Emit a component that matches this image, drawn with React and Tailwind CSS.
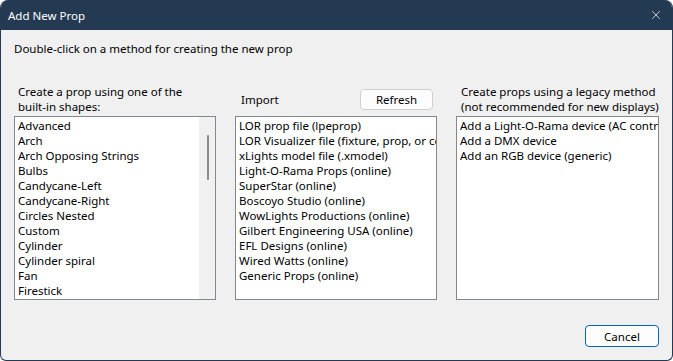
import { X } from "lucide-react";

const shapes = [
  "Advanced",
  "Arch",
  "Arch Opposing Strings",
  "Bulbs",
  "Candycane-Left",
  "Candycane-Right",
  "Circles Nested",
  "Custom",
  "Cylinder",
  "Cylinder spiral",
  "Fan",
  "Firestick",
];

const imports = [
  "LOR prop file (lpeprop)",
  "LOR Visualizer file (fixture, prop, or container)",
  "xLights model file (.xmodel)",
  "Light-O-Rama Props (online)",
  "SuperStar (online)",
  "Boscoyo Studio (online)",
  "WowLights Productions (online)",
  "Gilbert Engineering USA (online)",
  "EFL Designs (online)",
  "Wired Watts (online)",
  "Generic Props (online)",
];

const legacy = [
  "Add a Light-O-Rama device (AC controller)",
  "Add a DMX device",
  "Add an RGB device (generic)",
];

const ListBox = ({ items, scroll, pad = "pl-[3px]" }) => (
  <div className="flex h-[184px] border border-[#828790] bg-white overflow-hidden">
    <div className={`flex-1 min-w-0 pt-[1px] ${pad}`}>
      {items.map((item) => (
        <div key={item} className="h-[15px] leading-[15px] whitespace-nowrap overflow-hidden">
          {item}
        </div>
      ))}
    </div>
    {scroll && (
      <div className="w-[16px] bg-[#f0f0f0] flex justify-center pt-[18px] pl-[1px]">
        <div className="w-[2px] h-[45px] bg-[#8a8a8a] rounded-full" />
      </div>
    )}
  </div>
);

export default function App() {
  return (
    <div className="w-[673px] h-[361px] bg-white">
      <div
        className="w-full h-full flex flex-col bg-[#f0f0f0] border border-[#243a52] border-t-0 rounded-t-[8px] rounded-b-[6px] overflow-hidden text-[11.5px] text-black"
        style={{ fontFamily: '"Noto Sans", "Open Sans", sans-serif' }}
      >
        {/* Title bar */}
        <div className="h-[30px] shrink-0 bg-[#243a52] flex items-center justify-between pl-[7px] pr-[9px] text-white">
          <span className="leading-[15px]">Add New Prop</span>
          <X className="w-[14px] h-[14px]" strokeWidth={1.2} />
        </div>

        <div className="flex-1 flex flex-col px-[13px]">
          <div className="pt-[11px] leading-[15px]">
            Double-click on a method for creating the new prop
          </div>

          <div className="mt-[28px] flex gap-[19px]">
            {/* Built-in shapes */}
            <div className="w-[202px] flex flex-col">
              <div className="h-[32px] leading-[15px] pl-[4px]">
                Create a prop using one of the
                <br />
                built-in shapes:
              </div>
              <ListBox items={shapes} scroll />
            </div>

            {/* Import */}
            <div className="w-[202px] flex flex-col">
              <div className="h-[32px] flex items-start justify-between pl-[6px] pr-[4px] pt-[5px]">
                <span className="leading-[15px] mt-[3px]">Import</span>
                <button className="w-[73px] h-[21px] border border-[#d0d0d0] bg-[#fdfdfd] rounded-[4px] leading-[15px]">
                  Refresh
                </button>
              </div>
              <ListBox items={imports} pad="pl-[3px]" />
            </div>

            {/* Legacy */}
            <div className="w-[203px] flex flex-col">
              <div className="h-[32px] leading-[15px] pl-[5px] whitespace-nowrap">
                Create props using a legacy method
                <br />
                (not recommended for new displays)
              </div>
              <ListBox items={legacy} />
            </div>
          </div>

          <div className="flex justify-end mt-[25px]">
            <button className="w-[74px] h-[22px] border border-[#0067c0] bg-[#fdfdfd] rounded-[4px] leading-[15px]">
              Cancel
            </button>
          </div>
        </div>
      </div>
    </div>
  );
}
